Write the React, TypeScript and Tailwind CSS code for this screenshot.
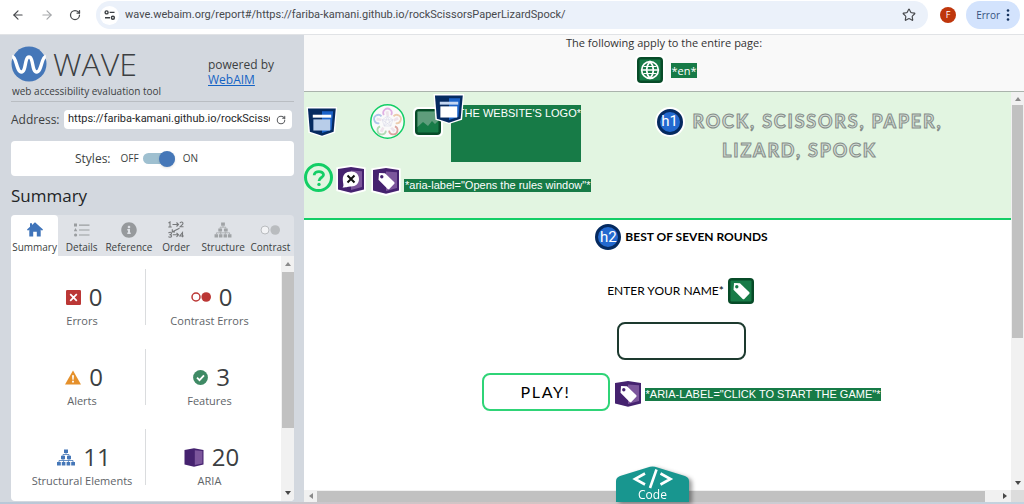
import React from "react";
import { FaInfoCircle } from "react-icons/fa";
import { ArrowLeft, ArrowRight, Globe, RotateCw, Star } from "lucide-react";

const open = "font-['Open_Sans','Noto_Sans',sans-serif]";
const liberation = "font-['Liberation_Sans',Arial,sans-serif]";

function SiteInfoIcon() {
  return (
    <svg viewBox="0 0 12 12" className="size-3" fill="none" stroke="#3c4043" strokeWidth="1.4">
      <circle cx="2.6" cy="3.4" r="1.5" />
      <path d="M5.6 3.4H10.5M1 8.8H6" />
      <circle cx="8.9" cy="8.8" r="1.5" />
    </svg>
  );
}

function WaveLogo() {
  return (
    <svg viewBox="0 0 36 36" className="size-9">
      <circle cx="18" cy="18" r="17.5" fill="#4577b8" />
      <path
        d="M1.200 10.500C5.600 11 5.400 26 10.400 26C15.300 26 13.400 11 18 11C22.600 11 20.700 26 25.600 26C30.600 26 30.400 11 34.800 10.500"
        fill="none"
        stroke="#fff"
        strokeWidth="3.400"
      />
    </svg>
  );
}

function HomeIcon() {
  return (
    <svg viewBox="0 0 16 15" className="h-[15px] w-4" fill="#3f74ba">
      <path d="M8 .3L16 7.600 15 8.700 13.700 7.600V14.500H9.800V9.800H6.200V14.500H2.300V7.600L1 8.700 0 7.600 3 4.800V1.200H5V3z" />
    </svg>
  );
}

function TreeIcon({ className }: { className: string }) {
  return (
    <svg viewBox="0 0 18 17" className={className} fill="currentColor">
      <path d="M7 .5h4v3.5H7zM4 6.8h4v3.4H4zM10 6.8h4v3.4h-4zM0 13h3.8v3.5H0zM4.8 13h3.6v3.5H4.8zM9.6 13h3.6v3.5H9.6zM14.2 13H18v3.5h-3.8z" />
      <path
        d="M9 4v1.5M6 7V5.5h6V7M6 10v1.5M12 10v1.5M2 13v-1.5h14V13M6.6 13v-1.5M11.4 13v-1.5"
        fill="none"
        stroke="currentColor"
        strokeWidth=".8"
      />
    </svg>
  );
}

function ListIcon() {
  return (
    <svg viewBox="0 0 16 14" className="h-3.5 w-4" fill="#9a9da0">
      <path d="M0 .5h3v3H0zM5 1.5h10.5v1.2H5zM1.5 5l1.8 3.2H-.3zM5 6.4h10.5v1.2H5zM5 11.4h10.5v1.2H5z" />
      <circle cx="1.6" cy="12" r="1.6" />
    </svg>
  );
}

function OrderIcon() {
  return (
    <svg viewBox="0 0 16 17" className="h-[17px] w-4" fill="none" stroke="#77797b" strokeWidth="1.100">
      <path d="M.5 2l1.5-1V6M.3 6h3.4M4.5 3.5h6M8.5 1.5l2 2-2 2M12 2.2C12.3.6 15 .6 15 2.4C15 3.6 13 4.4 12 5.8h3.5M11.5 7.2L4.5 10.8M4.3 8.2v2.8H7M.5 12C1.5 11 3.5 11 3.5 12.4C3.5 13.4 2.5 13.6 1.5 13.6C2.5 13.6 3.6 13.9 3.6 15C3.6 16.4 1.4 16.5.4 15.6M4.8 13.8h5.7M8.5 11.8l2 2-2 2M14.5 16.3v-4.8L11.8 15h4" />
    </svg>
  );
}

function ContrastIcon({ color, ring }: { color: string; ring: number }) {
  return (
    <svg viewBox="0 0 20 10" className="h-2.5 w-5">
      <circle cx="5" cy="5" r="4" fill="#fff" fillOpacity=".6" stroke={color} strokeWidth={ring} />
      <circle cx="15.2" cy="5" r="4.8" fill={color} />
    </svg>
  );
}

function ErrorIcon() {
  return (
    <svg viewBox="0 0 15 15" className="size-[15px]">
      <rect width="15" height="15" rx="1.2" fill="#bb3735" />
      <path d="M4.2 4.2l6.6 6.6M10.8 4.2l-6.6 6.6" stroke="#fff" strokeWidth="1.7" />
    </svg>
  );
}

function AlertIcon() {
  return (
    <svg viewBox="0 0 16 15" className="h-[15px] w-4">
      <path d="M8 .5L16 14.5H0z" fill="#e5902b" />
      <path d="M7 5.2h2l-.4 4.6H7.4zM7.1 10.8h1.8v1.7H7.1z" fill="#fff" />
    </svg>
  );
}

function FeatureIcon() {
  return (
    <svg viewBox="0 0 15 15" className="size-[15px]">
      <circle cx="7.5" cy="7.5" r="7.4" fill="#3f8a65" />
      <path d="M4 7.7l2.5 2.5L11 5.4" fill="none" stroke="#fff" strokeWidth="1.8" />
    </svg>
  );
}

function AriaIcon() {
  return (
    <svg viewBox="0 0 20 19" className="h-[19px] w-5">
      <path d="M.5 2L10 .3 19.500 2V16.500L10 18.700.5 16.500z" fill="#45226f" />
      <path d="M10.800 2.300L18.400 2.900V15.600L10.800 17z" fill="#7c569c" />
    </svg>
  );
}

/* Purple shield used behind the ARIA markers */
function Shield({ halo, children }: { halo?: boolean; children: React.ReactNode }) {
  return (
    <svg viewBox="0 0 30 30" className="size-[30px] shrink-0">
      {halo && <path d="M.3 2.600L15 0 29.700 2.600V26L15 30 .3 26z" fill="#fff" />}
      <path d="M2 4L15 2 28 4V24.500L15 27.800 2 24.500z" fill="#45226f" />
      <path d="M15 5.500L26 6.200V22L15 25z" fill="#7c569c" />
      {children}
    </svg>
  );
}

function TagPath() {
  return (
    <path
      fillRule="evenodd"
      d="M8 7.500Q7.300 7 8.500 7L14 7.300 23.300 16.300Q24 17 23.300 17.700L18.300 23Q17.500 23.600 16.700 22.900L7.500 13.800zM10.800 9a1.700 1.700 0 1 0 0 3.400 1.700 1.700 0 0 0 0-3.400z"
      fill="#fff"
    />
  );
}

function StructureIcon({ solid }: { solid?: boolean }) {
  return (
    <svg viewBox="0 0 33 33" className="size-8">
      <path d="M.5 1H32L30 27.500 16.500 32 2.500 27.500z" fill="#fff" />
      <path d="M2 2.500H30.700L28.500 26.500 16.500 30.600 4 26.500z" fill="#052a60" />
      <path d="M16.500 5.500H28L26.300 24.500 16.500 27.800z" fill="#1c63c8" />
      <path d="M7 9h19v3H7z" fill={solid ? "#c5d7f2" : "#fff"} />
      <path d="M7.600 13.800H25V25.300H7.600z" fill={solid ? "#fff" : "#b8cde9"} />
    </svg>
  );
}

function GreenBox({ children, halo }: { children: React.ReactNode; halo?: boolean }) {
  return (
    <svg viewBox="0 0 30 30" className="size-[30px] shrink-0">
      {halo && <rect width="30" height="30" rx="5" fill="#fff" />}
      <rect x="2" y="2" width="26" height="26" rx="4" fill="#074b28" />
      <rect x="4.500" y="4.500" width="21" height="21" rx="1" fill="#177b47" />
      {children}
    </svg>
  );
}

function HeadingBadge({ label, halo }: { label: string; halo?: boolean }) {
  return (
    <span
      className={
        "inline-flex size-[26px] shrink-0 items-center justify-center rounded-full border-[3px] border-[#052a60] bg-[#2369cf] text-[15px] leading-none text-white font-['Roboto','Open_Sans',sans-serif] " +
        (halo ? "ring-2 ring-white" : "")
      }
    >
      {label}
    </span>
  );
}

function GesturesLogo() {
  const hands = [
    { x: 17.500, y: 8.500, c: "#e0b0e3", a: 0 },
    { x: 27, y: 15, c: "#ecccae", a: 72 },
    { x: 23.500, y: 26.500, c: "#dca49f", a: 144 },
    { x: 11.500, y: 26.500, c: "#b3dab6", a: 216 },
    { x: 8, y: 15, c: "#b0c6e8", a: 288 },
  ];
  return (
    <svg viewBox="0 0 35 35" className="size-[35px] shrink-0">
      <circle cx="17.500" cy="17.500" r="16.700" fill="#fafafa" stroke="#13ce66" strokeWidth="1.500" />
      <path
        d="M17.500 12L20.800 22 12.200 15.800H22.800L14.200 22zM17.500 12L22.800 15.800 20.800 22H14.200L12.200 15.800z"
        fill="none"
        stroke="#d9d9ea"
        strokeWidth=".6"
      />
      {hands.map((h) => (
        <g key={h.a} transform={`translate(${h.x} ${h.y}) rotate(${h.a})`}>
          <path d="M-3.600 2.500A4.200 4.200 0 1 1 3.600 2.500" fill="none" stroke={h.c} strokeWidth="1.800" />
          <path d="M-2-1L1-1.600 1.500 3.500H-1z" fill="#eee2ea" />
        </g>
      ))}
    </svg>
  );
}

function Arrow({ dir }: { dir: "up" | "down" | "left" | "right" }) {
  const d = {
    up: "M4 2L7 6H1z",
    down: "M4 6L7 2H1z",
    left: "M2 4L6 1V7z",
    right: "M6 4L2 1V7z",
  }[dir];
  return (
    <svg viewBox="0 0 8 8" className="size-2 shrink-0">
      <path d={d} fill={dir === "left" || dir === "up" ? "#8a8a8a" : "#484848"} />
    </svg>
  );
}

function BrowserBar() {
  return (
    <header className={"flex h-[35px] shrink-0 items-center border-b border-[#e1e3e6] bg-white pb-1 pr-1 " + open}>
      <nav className="flex w-24 items-center gap-[15px] pl-[11px]">
        <button aria-label="Back"><ArrowLeft className="size-3.5 text-[#47494d]" /></button>
        <button aria-label="Forward"><ArrowRight className="size-3.5 text-[#a5a7aa]" /></button>
        <button aria-label="Reload"><RotateCw className="size-3 text-[#47494d]" strokeWidth={2.500} /></button>
      </nav>
      <div className="flex h-7 flex-1 items-center rounded-full bg-[#ebf1fa] pl-1 pr-3">
        <button aria-label="Site information" className="flex size-[19px] items-center justify-center rounded-full bg-white">
          <SiteInfoIcon />
        </button>
        <input
          aria-label="Page address"
          className="ml-1.5 min-w-0 flex-1 bg-transparent text-[11px] text-[#47494d] outline-none font-['Roboto','Open_Sans',sans-serif]"
          defaultValue="wave.webaim.org/report#/https://fariba-kamani.github.io/rockScissorsPaperLizardSpock/"
        />
        <button aria-label="Bookmark"><Star className="size-3.5 text-[#47494d]" /></button>
      </div>
      <button aria-label="Profile" className="ml-3 flex size-4 items-center justify-center rounded-full bg-[#bf360c] text-[9px] text-white">
        F
      </button>
      <button className="ml-2.5 flex h-7 items-center gap-1.5 rounded-full bg-[#d3e3fd] pl-2.5 pr-2.5 text-[10px] text-[#35527e]">
        Error
        <svg viewBox="0 0 4 14" className="h-3.5 w-1" fill="#16335f">
          <circle cx="2" cy="2.500" r="1.300" />
          <circle cx="2" cy="7" r="1.300" />
          <circle cx="2" cy="11.500" r="1.300" />
        </svg>
      </button>
    </header>
  );
}

const tabs = [
  { name: "Summary", icon: <HomeIcon /> },
  { name: "Details", icon: <ListIcon /> },
  { name: "Reference", icon: <FaInfoCircle className="size-4 text-[#96999c]" /> },
  { name: "Order", icon: <OrderIcon /> },
  { name: "Structure", icon: <TreeIcon className="h-4 w-[18px] text-[#a0a3a6]" /> },
  { name: "Contrast", icon: <ContrastIcon color="#b9bcbf" ring={1} /> },
];

const stats = [
  { name: "Errors", count: 0, icon: <ErrorIcon /> },
  { name: "Contrast Errors", count: 0, icon: <ContrastIcon color="#bb3735" ring={1.500} /> },
  { name: "Alerts", count: 0, icon: <AlertIcon /> },
  { name: "Features", count: 3, icon: <FeatureIcon /> },
  { name: "Structural Elements", count: 11, icon: <TreeIcon className="h-[17px] w-[18px] text-[#4577b8]" /> },
  { name: "ARIA", count: 20, icon: <AriaIcon /> },
];

function Sidebar() {
  return (
    <aside className={"flex w-[304px] shrink-0 flex-col bg-[#d3d8df] pl-[11px] pr-2.5 text-[#3c3f42] " + open}>
      <div className="flex h-[67px] justify-between border-b border-[#b9bdc2]">
        <div className="pt-[11px]">
          <div className="flex h-9 items-center gap-1.5">
            <WaveLogo />
            <span className="text-[32px] font-light leading-9">WAVE</span>
          </div>
          <p className="pl-px text-[10px] leading-[18px]">web accessibility evaluation tool</p>
        </div>
        <p className="w-[86px] pt-[22px] text-xs leading-[15px]">
          powered by
          <br />
          <a href="https://webaim.org" className="text-[#1463c4] underline">WebAIM</a>
        </p>
      </div>
      <div className="mt-2 flex h-[19px] items-center justify-between">
        <label htmlFor="address" className="text-xs">Address:</label>
        <div className="mr-0.5 flex h-[19px] w-[228px] items-center rounded-sm bg-white pl-1 pr-1.5">
          <input
            id="address"
            className="min-w-0 flex-1 text-[11px] text-[#26282a] outline-none font-['Roboto','Open_Sans',sans-serif]"
            defaultValue="https://fariba-kamani.github.io/rockScissorsPaperLizardSpock/"
          />
          <button aria-label="Reload report" className="ml-1.5"><RotateCw className="size-2.5 text-[#5b5d60]" strokeWidth={2.500} /></button>
        </div>
      </div>
      <div className="mt-3 flex h-[35px] items-center rounded-sm bg-white pl-16">
        <span className="text-xs">Styles:</span>
        <label className="ml-2.5 flex items-center text-[10px]">
          OFF
          <input type="checkbox" role="switch" aria-label="Styles on" defaultChecked className="peer sr-only" />
          <span className="mx-1 flex h-[11px] w-8 items-center justify-end rounded-full bg-[#9fc0d0]">
            <span className="size-4 rounded-full bg-[#4577b8] shadow" />
          </span>
          <span className="ml-1">ON</span>
        </label>
      </div>
      <h2 className="mt-2 text-[17px] leading-6 text-[#222426]">Summary</h2>
      <div role="tablist" className="mt-[7px] grid shrink-0 grid-cols-6 rounded-t-[4px] bg-[#dfe2e7]">
        {tabs.map((t, i) => (
          <button
            key={t.name}
            role="tab"
            aria-selected={i === 0}
            className={"flex h-[41px] flex-col items-center rounded-t-[4px] pt-1.5 text-[10px] " + (i === 0 ? "bg-white" : "")}
          >
            <span className="flex h-[17px] items-center">{t.icon}</span>
            <span className="leading-[18px]">{t.name}</span>
          </button>
        ))}
      </div>
      <div className="mb-px flex min-h-0 flex-1 overflow-hidden rounded-b-[4px] bg-white">
        <ul className="grid flex-1 auto-rows-[56px] grid-cols-2 gap-y-6 overflow-hidden px-2 pt-[13px]">
          {stats.map((s, i) => (
            <li
              key={s.name}
              className={"flex flex-col items-center whitespace-nowrap " + (i % 2 === 0 ? "border-r border-[#dadcde]" : "")}
            >
              <span className="flex items-center gap-2 pl-1 pt-3.5 text-2xl leading-7">
                {s.icon}
                {s.count}
              </span>
              <span className="text-[11px] leading-5 text-[#606468]">{s.name}</span>
            </li>
          ))}
        </ul>
        <div className="flex w-[13px] flex-col items-center bg-[#f1f1f1] py-1">
          <Arrow dir="up" />
          <div className="mt-1 h-[156px] w-3 shrink-0 bg-[#c1c1c1]" />
          <div className="mt-auto flex"><Arrow dir="down" /></div>
        </div>
      </div>
    </aside>
  );
}

function ReportHeader() {
  return (
    <div className="flex h-32 border-b-2 border-[#13ce66] bg-[#e2f5e1]">
      <div className="w-[284px] shrink-0">
        <div className="flex h-[71px] pt-3">
          <span className="ml-0.5 mt-0.5"><StructureIcon /></span>
          <span className="ml-8"><GesturesLogo /></span>
          <span className="ml-2 mt-[3px]">
            <GreenBox halo>
              <path d="M4.500 4.500h21v9L22 17l-3-3-4 5-5-4-5.500 5z" fill="#5f9d7c" />
            </GreenBox>
          </span>
          <div
            className={
              "relative ml-2 mt-px h-[57px] w-[130px] whitespace-nowrap bg-[#177b47] text-right text-[11px] leading-4 text-white " +
              liberation
            }
          >
            *THE WEBSITE'S LOGO*
            <span className="absolute -left-[18px] -top-3"><StructureIcon solid /></span>
          </div>
        </div>
        <div className="flex">
          <button
            aria-label="Opens the rules window"
            className="flex size-[29px] shrink-0 items-center justify-center rounded-full border-[3px] border-[#13ce66]"
          >
            <svg viewBox="0 0 20 20" className="size-5" fill="none" stroke="#13ce66" strokeWidth="2.800">
              <path d="M5.200 7.300C5.200 2.300 14.800 2.600 14.500 7C14.300 9.600 10 9.500 10 13" />
              <circle cx="10" cy="16.400" r="1.700" fill="#13ce66" stroke="none" />
            </svg>
          </button>
          <span className="ml-[3px] mt-0.5">
            <Shield halo>
              <path d="M15 6.500C20 6.500 23 9.500 23 14C23 18.500 20 21.500 15 21.500C12 21.500 11 22.500 6.500 22.500C8.500 20.500 6.800 19 6.800 14C6.800 9.500 10 6.500 15 6.500z" fill="#fff" />
              <path d="M11.500 10.500l7 7M18.500 10.500l-7 7" stroke="#111" strokeWidth="2" />
            </Shield>
          </span>
          <span className="ml-[5px] mt-[3px]"><Shield halo><TagPath /></Shield></span>
          <span className={"ml-[3px] mt-4 h-[13px] whitespace-nowrap bg-[#177b47] px-px text-[11px] leading-[13px] text-white " + liberation}>
            *aria-label="Opens the rules window"*
          </span>
        </div>
      </div>
      <h1 className="flex flex-1 flex-col items-center pt-[15px] text-lg font-bold leading-[29px] tracking-widest text-[#d3ddd5] font-['Lato','Open_Sans',sans-serif] [-webkit-text-stroke:1px_#858d89]">
        <span className="flex h-[29px] items-center gap-2.5">
          <span className="inline-flex font-normal tracking-normal [-webkit-text-stroke:0]"><HeadingBadge label="h1" halo /></span>
          ROCK, SCISSORS, PAPER,
        </span>
        <span>LIZARD, SPOCK</span>
      </h1>
    </div>
  );
}

function ReportBody() {
  return (
    <div className="flex flex-1 flex-col items-center pl-12 pt-1 text-black font-['Lato','Open_Sans',sans-serif]">
      <h2 className="flex h-[26px] items-center gap-1 text-xs font-bold">
        <span className="inline-flex font-normal"><HeadingBadge label="h2" /></span>
        BEST OF SEVEN ROUNDS
      </h2>
      <label htmlFor="player" className="mt-[26px] flex h-[30px] items-center gap-0.5 text-xs">
        ENTER YOUR NAME*
        <GreenBox><TagPath /></GreenBox>
      </label>
      <input id="player" className="mt-4 h-[38px] w-[129px] rounded-lg border-2 border-[#1d3a2f] px-2 outline-none" />
      <div className="mt-[13px] flex items-center">
        <button className="h-[38px] w-32 rounded-lg border-2 border-[#2fd477] text-base tracking-widest">PLAY!</button>
        <span className="ml-[3px] mt-1"><Shield><TagPath /></Shield></span>
        <span className={"ml-0.5 mt-1 h-[13px] whitespace-nowrap bg-[#177b47] px-px text-[11px] leading-[13px] text-white " + liberation}>
          *ARIA-LABEL="CLICK TO START THE GAME"*
        </span>
      </div>
    </div>
  );
}

function Report() {
  return (
    <main className="relative flex min-w-0 flex-1 flex-col">
      <section className={"flex h-[57px] shrink-0 flex-col items-center border-b border-[#aab3ac] bg-[#f9f9f9] text-[#333] " + open}>
        <p className="text-[11px] leading-[15px]">The following apply to the entire page:</p>
        <div className="mt-[5px] flex items-center gap-1.5 pl-1">
          <GreenBox halo>
            <Globe x="5" y="5" width="20" height="20" color="#fff" strokeWidth={2} />
            <path d="M8.500 11.500h13M8.500 18.500h13" stroke="#fff" strokeWidth="1.200" />
          </GreenBox>
          <span className="bg-[#177b47] text-[11px] leading-[15px] text-white">*en*</span>
        </div>
      </section>
      <div className="flex min-h-0 flex-1">
        <div className="flex min-w-0 flex-1 flex-col bg-white">
          <ReportHeader />
          <ReportBody />
        </div>
        <div className="flex w-[13px] shrink-0 flex-col items-center bg-[#f1f1f1] py-[3px]">
          <Arrow dir="up" />
          <div className="mt-0.5 h-[233px] w-[11px] bg-[#c1c1c1]" />
          <div className="mt-auto flex"><Arrow dir="down" /></div>
        </div>
      </div>
      <div className="flex h-3 shrink-0 items-center bg-[#f1f1f1] pl-[3px]">
        <Arrow dir="left" />
        <div className="ml-0.5 mr-4 h-[11px] flex-1 bg-[#c1c1c1]" />
        <Arrow dir="right" />
        <div className="ml-0.5 h-3 w-[13px] bg-[#dcdcdc]" />
      </div>
      <button className={"absolute bottom-0 left-[312px] flex h-9 w-[73px] flex-col items-center text-xs text-white drop-shadow-[3px_2px_2px_rgba(0,0,0,0.4)] " + open}>
        <svg viewBox="0 0 73 36" className="absolute inset-0 h-9 w-[73px]">
          <path d="M0 36V15Q0 11.500 4 10L34 .8Q36.500 0 39 .8L69 10Q73 11.500 73 15V36z" fill="#18968f" />
          <path d="M29 7.500L19 13 29 18.500M44.500 7.500L54.500 13 44.500 18.500M40.500 3.500L34 22" fill="none" stroke="#fff" strokeWidth="2.600" />
        </svg>
        <span className="relative mt-auto leading-[14px]">Code</span>
      </button>
    </main>
  );
}

export default function App() {
  return (
    <div className="flex h-screen flex-col overflow-hidden bg-white">
      <BrowserBar />
      <div className="flex min-h-0 flex-1">
        <Sidebar />
        <Report />
      </div>
      <div className="h-0.5 shrink-0 bg-linear-to-r from-[#b9c8d8] via-[#d5c4c4] to-[#c3d3e0]" />
    </div>
  );
}
